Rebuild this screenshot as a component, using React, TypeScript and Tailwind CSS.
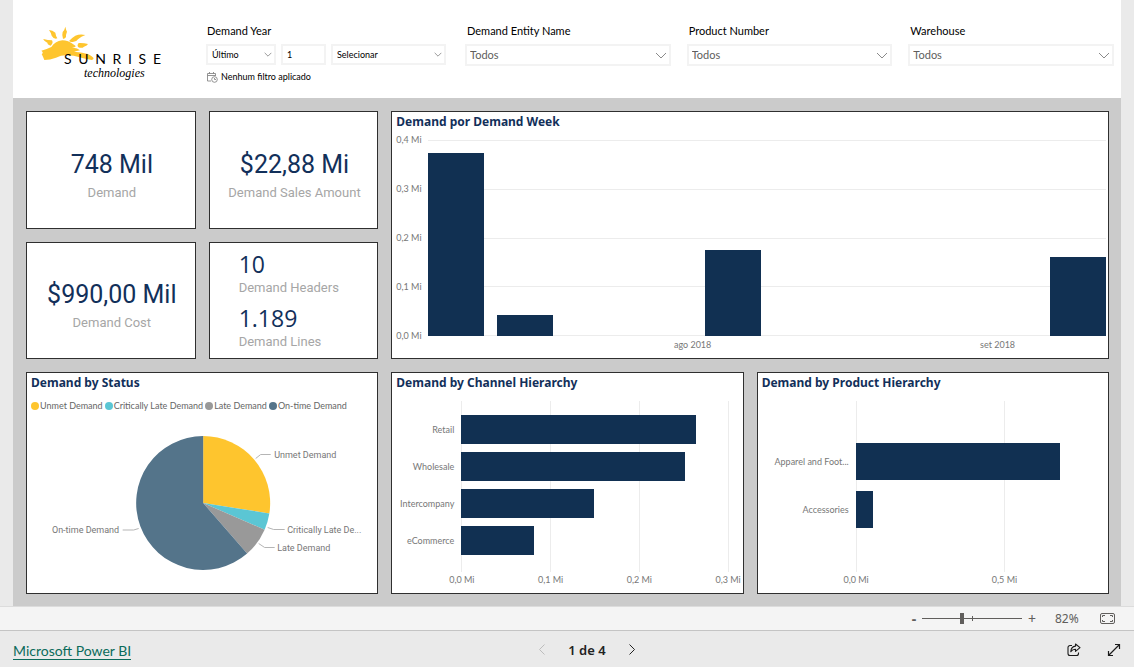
import React, { useState } from "react";

interface Bar {
  label: string;
  value: number;
}

interface Slice {
  label: string;
  color: string;
  from: number;
  to: number;
}

const WEEKS = [0.373, 0.042, 0, 0, 0.175, 0, 0, 0, 0, 0.161];
const WEEK_TICKS = ["0,4 Mi", "0,3 Mi", "0,2 Mi", "0,1 Mi", "0,0 Mi"];

const CHANNELS: Bar[] = [
  { label: "Retail", value: 0.264 },
  { label: "Wholesale", value: 0.252 },
  { label: "Intercompany", value: 0.15 },
  { label: "eCommerce", value: 0.082 },
];

const PRODUCTS: Bar[] = [
  { label: "Apparel and Foot...", value: 0.688 },
  { label: "Accessories", value: 0.06 },
];

// angles in degrees, clockwise from the top
const SLICES: Slice[] = [
  { label: "Unmet Demand", color: "#fec52e", from: 0, to: 99 },
  { label: "Critically Late Demand", color: "#5bc6d4", from: 99, to: 113.5 },
  { label: "Late Demand", color: "#999999", from: 113.5, to: 139 },
  { label: "On-time Demand", color: "#54748a", from: 139, to: 360 },
];

function Chevron({ className }: { className: string }) {
  return (
    <svg viewBox="0 0 12 7" className={className} fill="none" stroke="currentColor">
      <path d="M1 1l5 5 5-5" />
    </svg>
  );
}

function Logo() {
  return (
    <div className="relative h-[60px] w-[130px] shrink-0 text-black">
      <svg viewBox="108 66 390 180" className="absolute inset-0 h-full w-full" fill="#fec52e">
        <path d="M124 152Q140 148 154 141Q164 124 187 121Q204 121 222 134Q234 141 216 143Q234 144 240 151Q230 153 222 155Q250 158 264 162Q290 176 276 180Q250 176 236 171Q222 166 204 166Q186 164 168 173Q150 180 133 180Q130 172 125 162Q132 158 124 152Z" />
        <path d="M130 117Q144 121 156 121Q161 130 152 137Q140 133 143 129Q130 122 130 117Z" />
        <path d="M147 90Q158 91 166 98Q167 107 172 115Q162 119 155 107Q153 98 147 90Z" />
        <path d="M196 80Q198 90 201 95Q197 105 198 111Q194 118 189 116Q185 106 188 96Q194 90 196 80Z" />
        <path d="M256 105Q240 101 226 107Q213 115 207 123Q212 128 221 125Q230 125 234 118Q244 109 256 105Z" />
        <path d="M264 132Q250 128 236 129Q230 136 235 142Q246 146 252 140Q262 137 264 132Z" />
      </svg>
      <div className="relative ml-7 flex w-[97px] justify-between pt-[28px] font-['Lato','Noto_Sans',sans-serif] text-[14px] leading-[18px]">
        {"SUNRISE".split("").map((c, i) => (
          <span key={i}>{c}</span>
        ))}
      </div>
      <div className="relative pl-12 font-['Liberation_Serif',serif] text-[12px] leading-[10px] italic">
        technologies
      </div>
    </div>
  );
}

function Slicer({ id, label }: { id: string; label: string }) {
  return (
    <div>
      <label htmlFor={id} className="block pl-[2px] text-[11px] leading-[16px] text-black">
        {label}
      </label>
      <div className="relative mt-[5px]">
        <select
          id={id}
          className="block h-[22px] w-full appearance-none border-2 border-[#f3f3f3] bg-white pt-px pl-[3px] text-[11px] text-[#605e5c]"
        >
          <option>Todos</option>
        </select>
        <Chevron className="pointer-events-none absolute top-2 right-1 h-[7px] w-3 text-[#8a8a8a]" />
      </div>
    </div>
  );
}

function YearSlicer() {
  const box = "block h-[21px] w-full appearance-none border-2 border-[#f3f3f3] bg-white pl-1 text-[9px] text-black";
  return (
    <div>
      <label htmlFor="year-mode" className="block pl-px text-[11px] leading-[16px] text-black">
        Demand Year
      </label>
      <div className="mt-[5px] flex gap-[5px]">
        <div className="relative w-[70px]">
          <select id="year-mode" className={box}>
            <option>Último</option>
          </select>
          <Chevron className="pointer-events-none absolute top-2 right-1 h-[5px] w-2 text-[#666]" />
        </div>
        <input aria-label="Quantidade" className={box + " max-w-[45px]"} defaultValue="1" />
        <div className="relative w-[115px] shrink-0">
          <select aria-label="Período" className={box}>
            <option>Selecionar</option>
          </select>
          <Chevron className="pointer-events-none absolute top-2 right-1 h-[5px] w-2 text-[#666]" />
        </div>
      </div>
      <div className="mt-[5px] flex items-center gap-[3px] pl-px text-[9px] leading-[14px] text-black">
        <svg viewBox="0 0 11 11" className="h-[11px] w-[11px]" fill="none" stroke="#888" strokeWidth="0.9">
          <path d="M4 9H.5V1.5h8V4M.5 3.5h8M2.5 0v2M6.5 0v2" />
          <circle cx="7.5" cy="7.5" r="2.8" />
          <path d="M7.5 6v1.5H9" />
        </svg>
        Nenhum filtro aplicado
      </div>
    </div>
  );
}

function Card({ title, className = "", children }: { title?: string; className?: string; children: React.ReactNode }) {
  return (
    <section className={"flex min-w-0 flex-col border border-[#2f2f2f] bg-white " + className}>
      {title && <h2 className="pl-1 text-[12px] leading-[19px] font-bold text-[#12305a]">{title}</h2>}
      {children}
    </section>
  );
}

function Kpi({ value, label }: { value: string; label: string }) {
  return (
    <Card className="items-center justify-center pt-[14px] pl-[2px] font-['Roboto',sans-serif]">
      <div className="text-[25px] leading-[32px] text-[#12305a]">{value}</div>
      <div className="text-[13px] leading-[24px] text-[#a6a6a6]">{label}</div>
    </Card>
  );
}

function WeekChart() {
  return (
    <div className="flex flex-1 flex-col pr-[2px] pl-1 font-['Lato','Noto_Sans',sans-serif] text-[9px] leading-[12px] text-[#777]">
      <div className="flex h-[211px] pt-[3px]">
        <div className="flex w-8 flex-col justify-between">
          {WEEK_TICKS.map((t) => (
            <span key={t}>{t}</span>
          ))}
        </div>
        <div className="grid flex-1 py-[6px]">
          <div className="col-start-1 row-start-1 flex flex-col justify-between">
            {WEEK_TICKS.map((t) => (
              <div key={t} className="h-px bg-[#ececec]" />
            ))}
          </div>
          <div className="col-start-1 row-start-1 grid grid-cols-10 items-end gap-[13px]">
            {WEEKS.map((v, i) => (
              <div key={i} className="bg-[#113052]" style={{ height: `${(v / 0.4) * 100}%` }} />
            ))}
          </div>
        </div>
      </div>
      <div className="-mt-[3px] flex pl-8 text-center">
        <span className="w-[78%]">ago 2018</span>
        <span className="w-[12%]">set 2018</span>
      </div>
    </div>
  );
}

interface BarChartProps {
  bars: Bar[];
  max: number;
  ticks: number[];
  labelClass: string;
  barClass: string;
  listClass: string;
}

function BarChart({ bars, max, ticks, labelClass, barClass, listClass }: BarChartProps) {
  return (
    <div className="flex flex-1 pr-[15px] font-['Lato','Noto_Sans',sans-serif] text-[9px] leading-[12px] text-[#777]">
      <div className={"flex flex-col pr-[7px] text-right " + labelClass + " " + listClass}>
        {bars.map((b) => (
          <div key={b.label} className={"flex items-center justify-end whitespace-nowrap " + barClass}>
            {b.label}
          </div>
        ))}
      </div>
      <div className="relative mt-[9px] h-[171px] flex-1">
        {ticks.map((t) => (
          <div key={t} className="absolute inset-y-0 flex w-px justify-center bg-[#ececec]" style={{ left: `${(t / max) * 100}%` }}>
            <span className="absolute top-full pt-[2px] whitespace-nowrap">{t.toFixed(1).replace(".", ",")} Mi</span>
          </div>
        ))}
        <div className={"relative -mt-[9px] flex flex-col " + listClass}>
          {bars.map((b) => (
            <div key={b.label} className={"bg-[#113052] " + barClass} style={{ width: `${(b.value / max) * 100}%` }} />
          ))}
        </div>
      </div>
    </div>
  );
}

function slicePath(s: Slice, cx: number, cy: number, r: number) {
  const pt = (deg: number) => {
    const a = (deg * Math.PI) / 180;
    return `${cx + r * Math.sin(a)} ${cy - r * Math.cos(a)}`;
  };
  return `M${cx} ${cy}L${pt(s.from)}A${r} ${r} 0 ${s.to - s.from > 180 ? 1 : 0} 1 ${pt(s.to)}Z`;
}

function StatusChart() {
  return (
    <>
      <ul className="mt-[7px] flex gap-[2px] pl-1 font-['Lato','Noto_Sans',sans-serif] text-[9px] leading-[14px] text-[#666]">
        {SLICES.map((s) => (
          <li key={s.label} className="flex items-center gap-px whitespace-nowrap">
            <span className="h-2 w-2 rounded-full" style={{ backgroundColor: s.color }} />
            {s.label}
          </li>
        ))}
      </ul>
      <svg viewBox="27 413 350 176" className="h-[176px] w-full font-['Roboto',sans-serif] text-[9px]">
        {SLICES.map((s) => (
          <path key={s.label} d={slicePath(s, 203, 503, 67)} fill={s.color} />
        ))}
        <g fill="none" stroke="#b5b5b5">
          <path d="M255.500 458.500l5-4h10" />
          <path d="M267.500 527.500l6 2h11" />
          <path d="M258.500 543.500l6 4h10" />
          <path d="M138.500 528.500l-5 1.500h-11" />
        </g>
        <g fill="#777">
          <text x="274" y="458">Unmet Demand</text>
          <text x="287" y="533">Critically Late De...</text>
          <text x="277" y="551">Late Demand</text>
          <text x="119" y="533" textAnchor="end">On-time Demand</text>
        </g>
      </svg>
    </>
  );
}

export default function App() {
  const [page, setPage] = useState(1);
  const [zoom, setZoom] = useState(40);

  return (
    <div className="flex min-h-screen flex-col bg-[#eaeaea] font-['Noto_Sans','Open_Sans',sans-serif]">
      <main className="mx-[13px] flex flex-1 flex-col bg-[#cbcbcb]">
        <header className="flex min-h-[98px] gap-10 bg-white pr-[7px] pl-[23px] font-['Lato','Noto_Sans',sans-serif]">
          <div className="pt-[22px]">
            <Logo />
          </div>
          <div className="grid flex-1 grid-cols-[243px_1fr_1fr_1fr] gap-4 pt-[23px]">
            <YearSlicer />
            <Slicer id="entity" label="Demand Entity Name" />
            <Slicer id="product" label="Product Number" />
            <Slicer id="warehouse" label="Warehouse" />
          </div>
        </header>

        <div className="grid flex-1 grid-cols-3 grid-rows-[248px_222px] gap-[13px] pt-[13px] pr-3 pb-3 pl-[13px]">
          <div className="grid grid-cols-2 grid-rows-2 gap-[13px]">
            <Kpi value="748 Mil" label="Demand" />
            <Kpi value="$22,88 Mi" label="Demand Sales Amount" />
            <Kpi value="$990,00 Mil" label="Demand Cost" />
            <Card className="gap-[6px] pt-[7px] pl-[29px]">
              {[["10", "Demand Headers"], ["1.189", "Demand Lines"]].map(([value, label]) => (
                <div key={label}>
                  <div className="font-['Open_Sans',sans-serif] text-[23px] leading-[28px] text-[#12305a]">{value}</div>
                  <div className="font-['Roboto',sans-serif] text-[13px] leading-[20px] text-[#a6a6a6]">{label}</div>
                </div>
              ))}
            </Card>
          </div>
          <Card title="Demand por Demand Week" className="col-span-2">
            <WeekChart />
          </Card>
          <Card title="Demand by Status">
            <StatusChart />
          </Card>
          <Card title="Demand by Channel Hierarchy">
            <BarChart
              bars={CHANNELS}
              max={0.3}
              ticks={[0, 0.1, 0.2, 0.3]}
              labelClass="w-[69px]"
              barClass="h-[29px]"
              listClass="gap-2 pt-[23px]"
            />
          </Card>
          <Card title="Demand by Product Hierarchy">
            <BarChart
              bars={PRODUCTS}
              max={0.8}
              ticks={[0, 0.5]}
              labelClass="w-[98px]"
              barClass="h-[37px]"
              listClass="gap-[11px] pt-[51px]"
            />
          </Card>
        </div>
      </main>

      <div className="flex h-[25px] items-center justify-end border-t border-b border-t-[#dcdcdc] border-b-[#c4c4c4] bg-[#f4f4f4] pr-[19px] text-[#605e5c]">
        <button aria-label="Reduzir" className="w-4 text-[14px] leading-[20px] font-bold">-</button>
        <div className="relative flex w-[100px] items-center">
          <div className="absolute left-1/2 h-[5px] w-px bg-[#605e5c]" />
          <input
            type="range"
            aria-label="Zoom"
            value={zoom}
            onChange={(e) => setZoom(Number(e.target.value))}
            className="relative block h-[11px] w-full appearance-none bg-transparent [&::-webkit-slider-runnable-track]:h-px [&::-webkit-slider-runnable-track]:bg-[#605e5c] [&::-webkit-slider-thumb]:-mt-[5px] [&::-webkit-slider-thumb]:h-[11px] [&::-webkit-slider-thumb]:w-1 [&::-webkit-slider-thumb]:appearance-none [&::-webkit-slider-thumb]:bg-[#605e5c]"
          />
        </div>
        <button aria-label="Ampliar" className="w-5 text-[14px] leading-[20px]">+</button>
        <span className="w-[46px] pl-[13px] text-[12px] leading-[20px]">82%</span>
        <button aria-label="Ajustar à página" className="ml-3">
          <svg viewBox="0 0 15 11" className="h-[11px] w-[15px]" fill="none" stroke="currentColor">
            <rect x="0.500" y="0.500" width="14" height="10" rx="1.500" />
            <path d="M5 2.500H2.500V4M2.500 7v1.500H5M10 2.500h2.500V4M12.500 7v1.500H10" />
          </svg>
        </button>
      </div>

      <footer className="grid h-9 grid-cols-[1fr_auto_1fr] items-center px-[13px] pt-px">
        <div>
          <a href="#" className="border-b border-[#0b6b5b] font-['Lato','Noto_Sans',sans-serif] text-[14px] leading-[18px] text-[#0b6b5b]">
            Microsoft Power BI
          </a>
        </div>
        <nav className="flex items-center gap-5 pl-10 text-[#222]">
          <button aria-label="Página anterior" disabled={page === 1} onClick={() => setPage(page - 1)} className="disabled:text-[#bdbdbd]">
            <Chevron className="h-[7px] w-3 rotate-90" />
          </button>
          <span className="text-[13px] leading-[18px] font-semibold">{page} de 4</span>
          <button aria-label="Próxima página" disabled={page === 4} onClick={() => setPage(page + 1)}>
            <Chevron className="h-[7px] w-3 -rotate-90" />
          </button>
        </nav>
        <div className="flex items-center justify-end gap-[26px] text-[#1b1b1b]">
          <button aria-label="Compartilhar">
            <svg viewBox="0 0 14 14" className="h-[14px] w-[14px]" fill="none" stroke="currentColor" strokeWidth="1.100">
              <path d="M5 2.500H3A2 2 0 0 0 1 4.500v6A2 2 0 0 0 3 12.500h6.500a2 2 0 0 0 2-2V9.500" />
              <path d="M8.500 1l4.500 3.700-4.500 3.700V6.300C6.500 6.200 5 7 3.800 8.700 4 5.500 5.500 3.300 8.500 3.100z" strokeLinejoin="round" />
            </svg>
          </button>
          <button aria-label="Tela inteira">
            <svg viewBox="0 0 14 14" className="h-[14px] w-[14px]" fill="none" stroke="currentColor" strokeWidth="1.200">
              <path d="M8 1.500h4.500V6M12.500 1.500l-11 11M1.500 8v4.500H6" />
            </svg>
          </button>
        </div>
      </footer>
    </div>
  );
}
